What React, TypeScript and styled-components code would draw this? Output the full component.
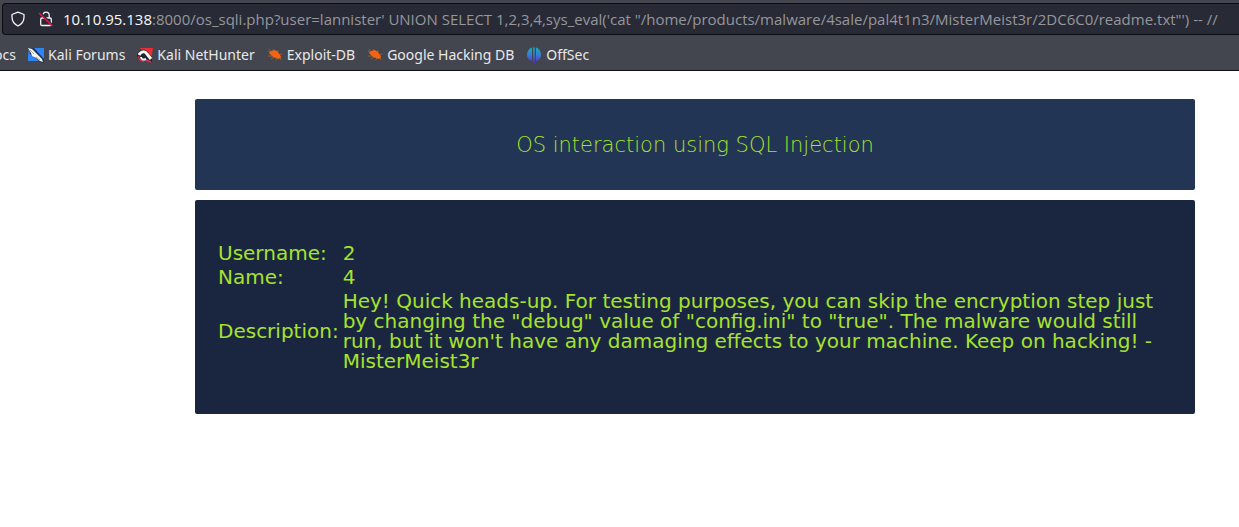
import React from "react";
import styled, { createGlobalStyle } from "styled-components";

const GlobalStyle = createGlobalStyle`
  body {
    margin: 0;
    background: #ffffff;
    font-family: "Noto Sans", sans-serif;
  }
`;

const BrowserBar = styled.header`
  background: #43464e;
  border-bottom: 1px solid #0c0d10;
  padding-top: 3px;
  overflow: hidden;
`;

const AddressField = styled.form`
  display: flex;
  align-items: center;
  box-sizing: border-box;
  height: 32px;
  margin-left: 2px;
  padding-left: 7px;
  background: #282a36;
  border: 1px solid #0c0d10;
  border-right: 0;
  border-radius: 4px 0 0 4px;
  font-family: "Open Sans", "Noto Sans", sans-serif;
  font-size: 15px;
  line-height: 20px;
`;

const AddressIcon = styled.svg`
  flex: none;
  width: 16px;
  height: 16px;
  margin-right: 12px;
`;

const Host = styled.label`
  margin-left: -3px;
  color: #f8f8f8;
`;

const UrlInput = styled.input`
  flex: 1;
  min-width: 0;
  height: 20px;
  padding: 0;
  border: 0;
  outline: 0;
  background: transparent;
  color: #96979c;
  font: inherit;
`;

const Bookmarks = styled.nav`
  display: flex;
  align-items: center;
  gap: 12px;
  box-sizing: border-box;
  height: 35px;
  padding-top: 4px;
`;

const Bookmark = styled.a`
  display: flex;
  align-items: center;
  gap: 4px;
  flex: none;
  color: #e8e8ea;
  font-size: 14px;
  line-height: 20px;
  text-decoration: none;
`;

const ClippedBookmark = styled(Bookmark)`
  justify-content: flex-end;
  width: 16px;
`;

const BookmarkIcon = styled.svg`
  flex: none;
  width: 16px;
  height: 16px;
`;

const Content = styled.main`
  display: flex;
  flex-direction: column;
  gap: 10px;
  padding: 28px 44px 28px 195px;
  color: #a6e22e;
  font-family: "DejaVu Sans", sans-serif;
`;

const TitlePanel = styled.section`
  padding: 34px 20px 33px;
  background: #233554;
  border-radius: 2px;
  text-align: center;
`;

const Title = styled.h1`
  margin: 0;
  font-size: 21px;
  line-height: 24px;
  font-weight: 200;
`;

const ResultPanel = styled.section`
  padding: 40px 20px;
  background: #1a2640;
  border-radius: 2px;
`;

const ResultTable = styled.table`
  border-spacing: 2px;
  font-size: 20px;
  line-height: 20px;

  th,
  td {
    padding: 1px;
    text-align: left;
    font-weight: 400;
  }
`;

const ForumsIcon = () => (
  <BookmarkIcon viewBox="0 0 16 16" aria-hidden="true">
    <path d="M1 1H16V14H0V9Z" fill="#2d85f8" />
    <path d="M1 1L6 1L16 12V16L12 15L2 7Z" fill="#26324a" />
    <path d="M0 1L4 2L8 6L11 9L14 12L15 15L12 14L8 11L4 9L3 6Z" fill="#f4f4f4" />
    <path d="M2 3L6 7M8 10L12 13" stroke="#a3a5aa" strokeWidth="1" />
  </BookmarkIcon>
);

const NetHunterIcon = () => (
  <BookmarkIcon viewBox="0 0 16 16" aria-hidden="true">
    <path d="M3 1H16L14 12L10 7L5 4Z" fill="#ef2b35" />
    <path d="M0 8C1 3 6 1 10 4L15 10V15L11 14L8 10L6 13L1 12Z" fill="#20232b" />
    <path d="M2 8C4 4 8 4 10 7L14 12" fill="none" stroke="#f4f4f4" strokeWidth="3" />
    <path d="M2 9C1 12 3 14 7 14" fill="none" stroke="#e92a45" strokeWidth="1.4" />
    <path d="M4 10C4 13 7 13 9 12" fill="none" stroke="#f4f4f4" strokeWidth="2" />
    <path d="M9 13L14 15" fill="none" stroke="#e92a55" strokeWidth="1.5" />
  </BookmarkIcon>
);

const BugIcon = () => (
  <BookmarkIcon viewBox="0 0 16 16" aria-hidden="true">
    <path
      d="M4 5L2 2M7 4L6 2M10 6L11 3M12 8L15 7M5 9L1 9M7 10L4 12M10 11L9 13M13 10L14 13M3 5L1 4"
      fill="none"
      stroke="#a7622f"
      strokeWidth="0.8"
    />
    <path d="M2 6L4 4L8 3L11 5L13 8L14 10L12 12L9 11L6 10L4 8Z" fill="#f26411" />
  </BookmarkIcon>
);

const OffSecIcon = () => (
  <BookmarkIcon viewBox="0 0 16 16" aria-hidden="true">
    <defs>
      <linearGradient id="offsec" x1="0" y1="0" x2="0" y2="1">
        <stop offset="0" stopColor="#16adc4" />
        <stop offset="0.5" stopColor="#397bd0" />
        <stop offset="1" stopColor="#592bd0" />
      </linearGradient>
    </defs>
    <path
      d="M6 0.5V14C3 13.5 1 11 1 8C1 4 3 1.5 6 0.5ZM7.2 0.5H8.8V16H7.2ZM10 0.5C13 1.5 15 4 15 8C15 11 13 13.5 10 14Z"
      fill="url(#offsec)"
    />
  </BookmarkIcon>
);

const bookmarks = [
  { name: "Kali Forums", Icon: ForumsIcon },
  { name: "Kali NetHunter", Icon: NetHunterIcon },
  { name: "Exploit-DB", Icon: BugIcon },
  { name: "Google Hacking DB", Icon: BugIcon },
  { name: "OffSec", Icon: OffSecIcon },
];

const results = [
  { label: "Username:", value: "2" },
  { label: "Name:", value: "4" },
  {
    label: "Description:",
    value:
      'Hey! Quick heads-up. For testing purposes, you can skip the encryption step just by changing the "debug" value of "config.ini" to "true". The malware would still run, but it won\'t have any damaging effects to your machine. Keep on hacking! -MisterMeist3r',
  },
];

export default function App() {
  return (
    <>
      <GlobalStyle />
      <BrowserBar>
        <AddressField onSubmit={(event) => event.preventDefault()}>
          <AddressIcon viewBox="0 0 16 16" aria-hidden="true">
            <path
              d="M8 1.2L14 3.5V6C14 10.5 12 13 8 15C4 13 2 10.5 2 6V3.5Z"
              fill="none"
              stroke="#f4f4f5"
              strokeWidth="1.3"
              strokeLinejoin="round"
            />
          </AddressIcon>
          <AddressIcon viewBox="0 0 16 16" aria-hidden="true">
            <path
              d="M4.8 7V4.5C4.8 0 11.2 0 11.2 4.5V7M4 7H12Q13.3 7 13.3 8.3V13.2Q13.3 14.5 12 14.5H4Q2.7 14.5 2.7 13.2V8.3Q2.7 7 4 7Z"
              fill="none"
              stroke="#f4f4f5"
              strokeWidth="1.3"
            />
            <path d="M2 1.5L15 15" stroke="#282a36" strokeWidth="2.4" />
            <path d="M1 2L14.5 15" stroke="#ee1145" strokeWidth="1.6" />
          </AddressIcon>
          <Host htmlFor="url">10.10.95.138</Host>
          <UrlInput
            id="url"
            spellCheck={false}
            defaultValue={
              ":8000/os_sqli.php?user=lannister' UNION SELECT 1,2,3,4,sys_eval('cat \"/home/products/malware/4sale/pal4t1n3/MisterMeist3r/2DC6C0/readme.txt\"') -- //"
            }
          />
        </AddressField>
        <Bookmarks aria-label="Bookmarks">
          <ClippedBookmark href="#">ocs</ClippedBookmark>
          {bookmarks.map(({ name, Icon }) => (
            <Bookmark href="#" key={name}>
              <Icon />
              {name}
            </Bookmark>
          ))}
        </Bookmarks>
      </BrowserBar>
      <Content>
        <TitlePanel>
          <Title>OS interaction using SQL Injection</Title>
        </TitlePanel>
        <ResultPanel>
          <ResultTable>
            <tbody>
              {results.map(({ label, value }) => (
                <tr key={label}>
                  <th scope="row">{label}</th>
                  <td>{value}</td>
                </tr>
              ))}
            </tbody>
          </ResultTable>
        </ResultPanel>
      </Content>
    </>
  );
}
